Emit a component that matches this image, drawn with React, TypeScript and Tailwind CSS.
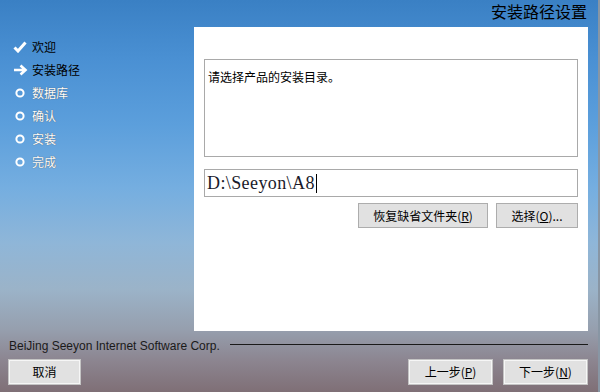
import React from 'react';

const cjk = { fontFamily: '"Noto Sans CJK SC", "Liberation Sans", sans-serif' };

function Check() {
  return (
    <svg width="14" height="12" viewBox="0 0 14 12">
      <path d="M1.5 6.5 L5 10 L12.5 1.5" fill="none" stroke="#fff" strokeWidth="3" strokeLinejoin="miter" />
    </svg>
  );
}

function Arrow() {
  return (
    <svg width="15" height="12" viewBox="0 0 15 12">
      <path d="M1 6 H12 M7.5 1.5 L12.5 6 L7.5 10.5" fill="none" stroke="#fff" strokeWidth="2.6" />
    </svg>
  );
}

function Ring() {
  return (
    <svg width="15" height="12" viewBox="0 0 15 12">
      <circle cx="7" cy="6" r="3.6" fill="none" stroke="#fff" strokeWidth="2" />
    </svg>
  );
}

const steps = [
  { label: '欢迎', icon: 'check', done: true },
  { label: '安装路径', icon: 'arrow', done: true },
  { label: '数据库', icon: 'ring', done: false },
  { label: '确认', icon: 'ring', done: false },
  { label: '安装', icon: 'ring', done: false },
  { label: '完成', icon: 'ring', done: false },
];

function Btn({ children, className }: { children: React.ReactNode; className: string }) {
  return (
    <div
      className={`flex items-center justify-center bg-[#e1e1e1] border border-[#adadad] text-[12px] text-black ${className}`}
      style={cjk}
    >
      {children}
    </div>
  );
}

function BigBtn({ children, className }: { children: React.ReactNode; className: string }) {
  return (
    <div
      className={`flex items-center justify-center bg-[#e1e1e1] border border-[#c4c4c4] shadow-[inset_0_0_0_1px_#f6f6f6] text-[12px] text-black ${className}`}
      style={cjk}
    >
      {children}
    </div>
  );
}

export default function App() {
  return (
    <div className="w-[600px] h-[392px] overflow-hidden flex flex-col bg-[linear-gradient(180deg,#3a80c4_0%,#4a90d3_15%,#5c9fdc_32%,#75aee0_48%,#8fb6d8_62%,#9bb3c8_74%,#969fae_84%,#8c8590_92%,#7f6f76_100%)] border-r-2 border-[#8896a4]">
      {/* title */}
      <div className="h-[27px] flex items-start justify-end pr-[11px] pt-[1px]">
        <span className="text-[16px] leading-[20px] text-black" style={cjk}>安装路径设置</span>
      </div>

      <div className="flex h-[304px]">
        {/* sidebar */}
        <div className="w-[194px] pt-[8px] pl-[13px] flex flex-col">
          {steps.map((s) => (
            <div key={s.label} className="h-[23px] flex items-center">
              <div className="w-[19px] flex items-center">
                {s.icon === 'check' ? <Check /> : s.icon === 'arrow' ? <Arrow /> : <Ring />}
              </div>
              <span
                className={`text-[12px] leading-[14px] ${s.done ? 'text-black' : 'text-white [text-shadow:0_0_1px_#444]'}`}
                style={cjk}
              >
                {s.label}
              </span>
            </div>
          ))}
        </div>

        {/* white panel */}
        <div className="w-[394px] bg-white pt-[32px] pl-[10px] pr-[10px] flex flex-col">
          <div className="h-[98px] border border-[#a9a9a9] px-[3px] pt-[4px]">
            <span className="text-[12px] leading-[16px] text-black" style={cjk}>请选择产品的安装目录。</span>
          </div>
          <div className="mt-[12px] h-[28px] border border-[#a9a9a9] flex items-center pl-[2px]">
            <span
              className="text-[18px] leading-[20px] text-[#1a1a2a] tracking-[0.4px]"
              style={{ fontFamily: '"Liberation Serif", serif' }}
            >
              D:\Seeyon\A8
            </span>
            <span className="w-[1px] h-[19px] bg-black ml-[1px]" />
          </div>
          <div className="mt-[6px] flex justify-end gap-[8px]">
            <Btn className="w-[130px] h-[25px]">
              恢复缺省文件夹(<span className="underline">R</span>)
            </Btn>
            <Btn className="w-[82px] h-[25px]">
              选择(<span className="underline">O</span>)...
            </Btn>
          </div>
        </div>
      </div>

      {/* footer */}
      <div className="flex items-center h-[28px] pl-[9px] pr-[10px] pt-[2px]">
        <span
          className="text-[12px] leading-[14px] text-[#1a1a1a] whitespace-nowrap"
          style={{ fontFamily: '"Liberation Sans", Arial, sans-serif' }}
        >
          BeiJing Seeyon Internet Software Corp.
        </span>
        <div className="flex-1 h-[1px] bg-[#1a1a1a] ml-[10px] mb-[3px]" />
      </div>
      <div className="flex items-start h-[33px] pl-[8px] pr-[10px]">
        <BigBtn className="w-[73px] h-[26px]">取消</BigBtn>
        <div className="flex-1" />
        <BigBtn className="w-[85px] h-[26px]">
          上一步(<span className="underline">P</span>)
        </BigBtn>
        <BigBtn className="w-[85px] h-[26px] ml-[10px]">
          下一步(<span className="underline">N</span>)
        </BigBtn>
      </div>
    </div>
  );
}
